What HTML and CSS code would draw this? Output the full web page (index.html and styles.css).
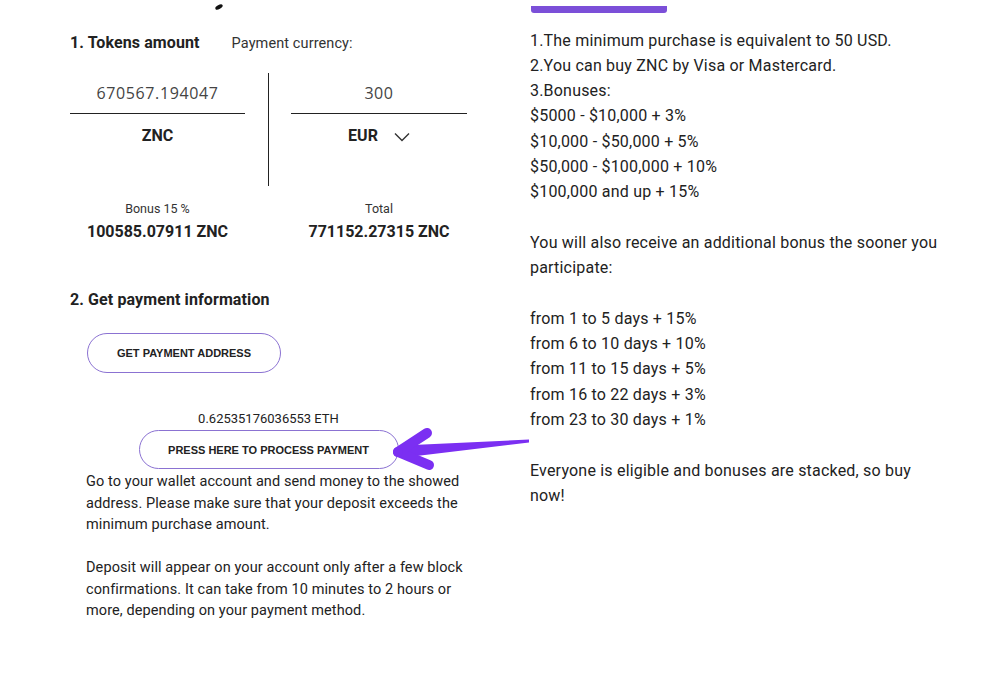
FILE: index.html
```html
<!DOCTYPE html>
<html lang="en">
<head>
<meta charset="utf-8">
<title>Buy ZNC</title>
<link rel="stylesheet" href="styles.css">
</head>
<body>
<div class="page">
  <span class="speck"></span>
  <section class="left">
    <div class="step-row">
      <h2 class="step">1. Tokens amount</h2>
      <span class="currency-label">Payment currency:</span>
    </div>
    <div class="converter">
      <div class="field">
        <div class="amount">670567.194047</div>
        <div class="unit">ZNC</div>
      </div>
      <div class="divider"></div>
      <div class="field">
        <div class="amount">300</div>
        <div class="unit">EUR
          <svg class="chev" width="16" height="10" viewBox="0 0 16 10"><path d="M1 1.5 L8 8.5 L15 1.5" fill="none" stroke="#333" stroke-width="1.4"/></svg>
        </div>
      </div>
    </div>
    <div class="totals">
      <div class="total">
        <div class="total-label">Bonus 15 %</div>
        <div class="total-value">100585.07911 ZNC</div>
      </div>
      <div></div>
      <div class="total">
        <div class="total-label">Total</div>
        <div class="total-value">771152.27315 ZNC</div>
      </div>
    </div>
    <h2 class="step step-two">2. Get payment information</h2>
    <button class="pill pill-address">GET PAYMENT ADDRESS</button>
    <div class="pay-block">
      <div class="eth">0.62535176036553 ETH</div>
      <button class="pill pill-process">PRESS HERE TO PROCESS PAYMENT</button>
    </div>
    <div class="notes">
      <p>Go to your wallet account and send money to the showed address. Please make sure that your deposit exceeds the minimum purchase amount.</p>
      <p>Deposit will appear on your account only after a few block confirmations. It can take from 10 minutes to 2 hours or more, depending on your payment method.</p>
    </div>
  </section>
  <section class="right">
    <div class="bar"></div>
    <div class="info">
      <div class="block">
        <div>1.The minimum purchase is equivalent to 50 USD.</div>
        <div>2.You can buy ZNC by Visa or Mastercard.</div>
        <div>3.Bonuses:</div>
        <div>$5000 - $10,000 + 3%</div>
        <div>$10,000 - $50,000 + 5%</div>
        <div>$50,000 - $100,000 + 10%</div>
        <div>$100,000 and up + 15%</div>
      </div>
      <div class="block">You will also receive an additional bonus the sooner you participate:</div>
      <div class="block">
        <div>from 1 to 5 days + 15%</div>
        <div>from 6 to 10 days + 10%</div>
        <div>from 11 to 15 days + 5%</div>
        <div>from 16 to 22 days + 3%</div>
        <div>from 23 to 30 days + 1%</div>
      </div>
      <div class="block">Everyone is eligible and bonuses are stacked, so buy now!</div>
    </div>
  </section>
  <svg class="arrow" width="1000" height="674" viewBox="0 0 1000 674">
    <polygon points="529,439.5 529,442.5 404,457.5 402,445.5" fill="#7b2ff2"/>
    <path d="M398 452 L427 433 M398 452 L429 465" stroke="#7b2ff2" stroke-width="10" stroke-linecap="round" stroke-linejoin="round" fill="none"/>
    <circle cx="398" cy="452" r="5" fill="#7b2ff2"/>
  </svg>
</div>
</body>
</html>
```
FILE: styles.css
```css
* { box-sizing: border-box; }
html, body { margin: 0; padding: 0; background: #fff; }
body {
  font-family: Roboto, "Liberation Sans", Arial, sans-serif;
  color: #222;
  width: 1000px;
  height: 674px;
  overflow: hidden;
}
.page {
  position: relative;
  display: flex;
  padding-left: 70px;
  gap: 63px;
  height: 674px;
}
.speck {
  position: absolute;
  left: 215px;
  top: 5px;
  width: 8px;
  height: 4px;
  background: #111;
  border-radius: 50%;
  transform: rotate(-28deg);
}
.left {
  width: 397px;
  padding-top: 33px;
}
.step-row {
  display: flex;
  align-items: baseline;
  gap: 32px;
}
.step {
  margin: 0;
  font-size: 16px;
  line-height: 20px;
  font-weight: 700;
  color: #222;
  letter-spacing: 0.1px;
}
.currency-label {
  font-size: 14.5px;
  line-height: 20px;
  color: #333;
  letter-spacing: 0.1px;
}
.converter {
  margin-top: 19px;
  display: grid;
  grid-template-columns: 175px 1px 176px;
  justify-content: space-between;
  height: 113px;
}
.divider { background: #222; width: 1px; height: 113px; }
.field { text-align: center; }
.amount {
  height: 41px;
  border-bottom: 1px solid #222;
  font-family: "Open Sans", "DejaVu Sans", sans-serif;
  font-size: 16px;
  line-height: 40px;
  letter-spacing: 0.6px;
  color: #444;
}
.unit {
  margin-top: 12px;
  font-size: 16px;
  line-height: 20px;
  font-weight: 700;
  color: #222;
  display: flex;
  justify-content: center;
  align-items: center;
}
.chev { margin-left: 16px; margin-top: 2px; }
.totals {
  margin-top: 15px;
  display: grid;
  grid-template-columns: 175px 1px 176px;
  justify-content: space-between;
}
.total { text-align: center; }
.total-label {
  font-size: 12.5px;
  line-height: 16px;
  color: #333;
}
.total-value {
  margin-top: 5px;
  font-size: 16px;
  line-height: 20px;
  font-weight: 700;
  color: #222;
}
.step-two { margin-top: 48px; }
.pill {
  display: block;
  background: #fff;
  border: 1px solid #8b72d2;
  border-radius: 20px;
  font-family: "Liberation Sans", Arial, sans-serif;
  font-weight: 700;
  font-size: 11px;
  color: #222;
  padding: 0;
  cursor: pointer;
}
.pill-address {
  margin-top: 23px;
  margin-left: 17px;
  width: 194px;
  height: 40px;
}
.pay-block {
  display: flex;
  flex-direction: column;
  align-items: center;
  margin-top: 38px;
}
.eth {
  font-size: 13px;
  line-height: 16px;
  color: #222;
}
.pill-process {
  margin-top: 3px;
  width: 260px;
  height: 39px;
}
.notes {
  margin-top: 2px;
  margin-left: 16px;
  width: 382px;
  font-size: 14.5px;
  line-height: 21.5px;
  letter-spacing: 0.1px;
  color: #222;
}
.notes p { margin: 0; }
.notes p + p { margin-top: 21.5px; }
.right {
  width: 412px;
  padding-top: 6px;
}
.bar {
  margin-left: 1px;
  width: 136px;
  height: 7px;
  background: #7b4fd8;
  border-radius: 0 0 3px 3px;
}
.info {
  margin-top: 14.5px;
  font-size: 16px;
  line-height: 25.3px;
  letter-spacing: 0.2px;
  color: #222;
}
.block + .block { margin-top: 25.3px; }
.arrow {
  position: absolute;
  left: 0;
  top: 0;
  pointer-events: none;
}
```
